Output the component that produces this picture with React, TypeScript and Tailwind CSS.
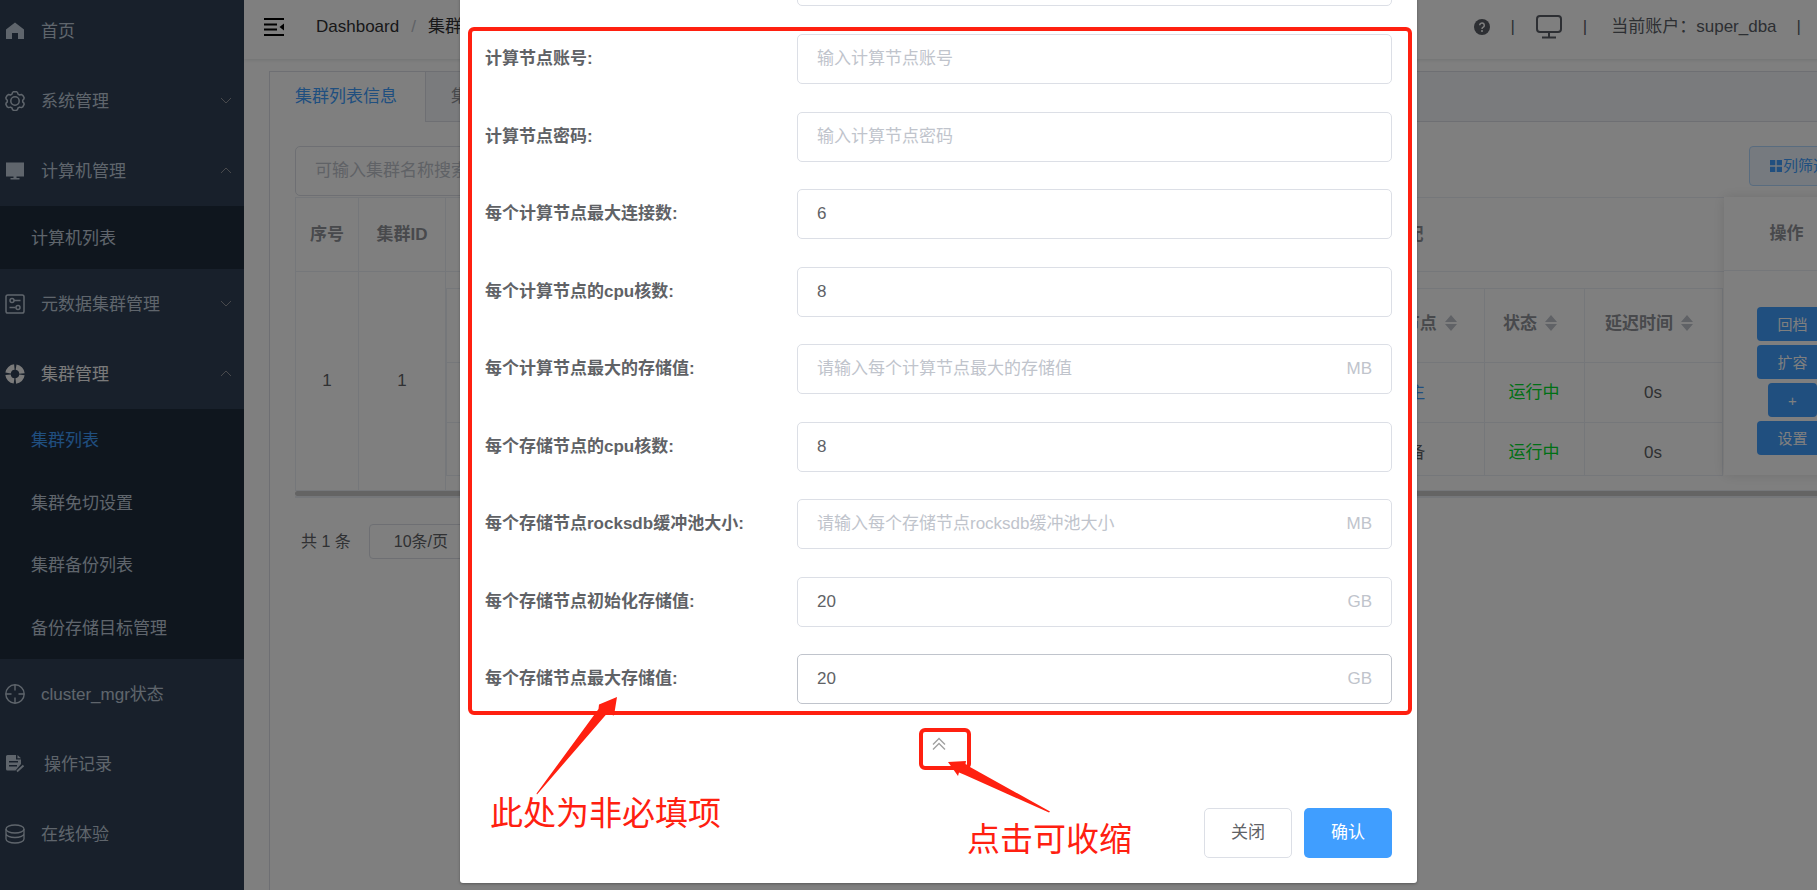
import type { ReactNode } from "react";

type IconName = "home" | "gear" | "monitor" | "sliders" | "help" | "aim" | "doc" | "coins";

function MenuIcon({ name }: { name: IconName }) {
  const shapes: Record<IconName, ReactNode> = {
    home: <path fill="currentColor" d="M10 1.4 1 8.6V18h6v-6h6v6h6V8.6z" />,
    gear: (
      <g fill="none" stroke="currentColor" strokeWidth="1.5" strokeLinejoin="round">
        <path d="M7.5 1.5 8.6.7h2.8l1.1.8.5 1.6 1.6.9 1.7-.5 1.5.8 1.3 2.4-.2 1.3-1.2 1.2v1.7l1.2 1.2.2 1.3-1.3 2.4-1.5.8-1.7-.5-1.6.9-.5 1.6-1.1.8H8.6l-1.1-.8-.5-1.6-1.6-.9-1.7.5-1.5-.8-1.3-2.4.2-1.3 1.2-1.2V9.2L1.1 8 .9 6.7l1.3-2.4 1.5-.8 1.7.5L7 3.1z" />
        <circle cx="10" cy="10" r="4.2" />
      </g>
    ),
    monitor: <path fill="currentColor" d="M1 1.5h18v14H1zM8.500 15.500h3V17h3v1.500h-9V17h3z" />,
    sliders: (
      <g fill="none" stroke="currentColor" strokeWidth="1.5">
        <rect x="1" y="1" width="18" height="18" rx="1.8" />
        <circle cx="7" cy="6.5" r="2" />
        <path d="M9 6.5h6.500M4.500 13.500h6" />
        <circle cx="13" cy="13.5" r="2" />
      </g>
    ),
    help: (
      <circle cx="10" cy="10" r="7" fill="none" stroke="currentColor" strokeWidth="5.4" strokeDasharray="9.2 1.8" strokeDashoffset="-.9" />
    ),
    aim: (
      <g fill="none" stroke="currentColor" strokeWidth="1.4">
        <circle cx="10" cy="10" r="9.2" />
        <path d="M10 1v5.500M10 13.500V19M1 10h5.500M13.500 10H19" />
      </g>
    ),
    doc: (
      <g>
        <path fill="currentColor" fillRule="evenodd" d="M2.500 1H11v4.500h5V10l-5.500 6.500h-8Q1 16.500 1 15V2.500Q1 1 2.500 1zM4 7v1.500h9V7zm0 4v1.500h8V11z" />
        <path fill="currentColor" d="M12.500 1 16 4.200h-3.500z" />
        <path stroke="currentColor" strokeWidth="1.8" d="m12 17.500 6.500-6" />
      </g>
    ),
    coins: (
      <g fill="none" stroke="currentColor" strokeWidth="1.3">
        <ellipse cx="10" cy="5" rx="9" ry="4" />
        <path d="M1 5v4.500c0 2.200 4 4 9 4s9-1.800 9-4V5M1 9.500V15c0 2.200 4 4 9 4s9-1.800 9-4V9.500" />
      </g>
    ),
  };
  return (
    <svg viewBox="0 0 20 20" className="size-5 shrink-0" aria-hidden="true">
      {shapes[name]}
    </svg>
  );
}

function Chevron({ up }: { up?: boolean }) {
  return (
    <svg viewBox="0 0 12 12" className="ml-auto size-3 text-[#909399]" fill="none" stroke="currentColor" aria-hidden="true">
      <path d={up ? "M1 8l5-5 5 5" : "M1 3l5 5 5-5"} />
    </svg>
  );
}

function MenuItem({ icon, label, open, active, wide }: { icon: IconName; label: string; open?: boolean; active?: boolean; wide?: boolean }) {
  return (
    <a href="#" className={`flex h-[70px] items-center pr-3 pl-[5px] ${active ? "text-[#f4f4f5]" : "text-[#bfcbd9]"} ${wide ? "gap-[19px]" : "gap-4"}`}>
      <MenuIcon name={icon} />
      <span className="pt-0.5">{label}</span>
      {open !== undefined && <Chevron up={open} />}
    </a>
  );
}

function SubItem({ label, active }: { label: string; active?: boolean }) {
  return (
    <a href="#" className={`flex items-center pt-0.5 pl-[31px] ${active ? "text-[#409eff]" : "text-[#bfcbd9]"}`}>
      {label}
    </a>
  );
}

function Sidebar() {
  return (
    <nav className="-mt-1 w-[244px] shrink-0 bg-[#304156]">
      <MenuItem icon="home" label="首页" />
      <MenuItem icon="gear" label="系统管理" open={false} />
      <MenuItem icon="monitor" label="计算机管理" open />
      <div className="grid h-[63px] bg-[#1f2d3d]">
        <SubItem label="计算机列表" />
      </div>
      <MenuItem icon="sliders" label="元数据集群管理" open={false} />
      <MenuItem icon="help" label="集群管理" open active />
      <div className="grid h-[250px] grid-rows-4 bg-[#1f2d3d]">
        <SubItem label="集群列表" active />
        <SubItem label="集群免切设置" />
        <SubItem label="集群备份列表" />
        <SubItem label="备份存储目标管理" />
      </div>
      <MenuItem icon="aim" label="cluster_mgr状态" />
      <MenuItem icon="doc" label="操作记录" wide />
      <MenuItem icon="coins" label="在线体验" />
    </nav>
  );
}

function TopBar() {
  return (
    <header className="flex h-[59px] shrink-0 items-center bg-white pr-[99px] pb-[6px] pl-5 text-[#303133] shadow-[0_1px_4px_rgba(0,21,41,0.12)]">
      <button type="button" aria-label="折叠菜单">
        <svg viewBox="0 0 20 18" className="h-[18px] w-5" aria-hidden="true">
          <path d="M0 1h20M0 6.500h13M0 11.500h13M0 17h20" stroke="#000" strokeWidth="2" />
          <path d="M20 5.500v7L15.500 9z" />
        </svg>
      </button>
      <div className="ml-8 flex items-center gap-3">
        <a href="#">Dashboard</a>
        <span className="text-[#c0c4cc]">/</span>
        <span>集群管理</span>
      </div>
      <div className="ml-auto flex items-center text-[#5a5e66]">
        <svg viewBox="0 0 16 16" className="size-4" aria-hidden="true">
          <circle cx="8" cy="8" r="8" fill="#5a5e66" />
          <path d="M5.700 6.300a2.300 2.300 0 1 1 3.600 1.900c-.9.6-1.300 1-1.300 1.700" fill="none" stroke="#fff" strokeWidth="1.5" />
          <circle cx="8" cy="12" r="1" fill="#fff" />
        </svg>
        <span className="ml-5">|</span>
        <svg viewBox="0 0 26 24" className="mx-[21px] h-6 w-[26px]" fill="none" stroke="currentColor" strokeWidth="2" aria-hidden="true">
          <rect x="1" y="1" width="24" height="16" rx="3" />
          <path d="M13 17v5M6 22.500h14" />
        </svg>
        <span>|</span>
        <span className="ml-6">当前账户：super_dba</span>
        <span className="ml-5">|</span>
      </div>
    </header>
  );
}

function SortArrows() {
  return (
    <svg viewBox="0 0 12 16" className="ml-2 inline-block h-4 w-3 align-[-2px]" fill="#c0c4cc" aria-hidden="true">
      <path d="M6 0l6 7H0zM6 16l6-7H0z" />
    </svg>
  );
}

function NodeTable() {
  const rows = [
    { role: "主", tone: "text-[#409eff]" },
    { role: "备", tone: "" },
  ];
  return (
    <div className="mt-4 h-[188px] overflow-hidden border-b border-[#ebeef5]">
      <table className="w-full table-fixed border-collapse border border-[#ebeef5] text-center">
        <colgroup>
          <col />
          <col className="w-[134px]" />
          <col className="w-[100px]" />
          <col className="w-[138px]" />
        </colgroup>
        <thead>
          <tr className="h-[74px] border-b border-[#ebeef5] text-[#909399]">
            <th />
            <th className="border-r border-[#ebeef5] pr-2 pb-1">主备节点<SortArrows /></th>
            <th className="border-r border-[#ebeef5] pr-2 pb-1">状态<SortArrows /></th>
            <th className="pr-2 pb-1">延迟时间<SortArrows /></th>
          </tr>
        </thead>
        <tbody>
          {rows.map((r) => (
            <tr key={r.role} className="h-[60px] border-b border-[#ebeef5]">
              <td />
              <td className={`border-r border-[#ebeef5] ${r.tone}`}>{r.role}</td>
              <td className="border-r border-[#ebeef5] text-[#00e02a]">运行中</td>
              <td>0s</td>
            </tr>
          ))}
        </tbody>
      </table>
    </div>
  );
}

function ActionButton({ label }: { label: string }) {
  return (
    <button type="button" className="h-[34px] rounded bg-[#409eff] px-5 text-[15px] leading-none text-white">
      {label}
    </button>
  );
}

function ClusterTable() {
  return (
    <div className="border-b-2 border-[#ebeef5]">
      <div className="relative">
        <table className="w-full table-fixed border-collapse border border-[#ebeef5] text-center">
          <colgroup>
            <col className="w-[63px]" />
            <col className="w-[87px]" />
            <col />
            <col className="w-[126px]" />
          </colgroup>
          <thead>
            <tr className="h-[74px] border-b border-[#ebeef5] text-[#909399]">
              <th className="border-r border-[#ebeef5]">序号</th>
              <th className="border-r border-[#ebeef5]">集群ID</th>
              <th className="pr-[299px] text-right">资源分配</th>
              <th />
            </tr>
          </thead>
          <tbody>
            <tr className="h-[219px] border-b border-[#ebeef5]">
              <td className="border-r border-[#ebeef5]">1</td>
              <td className="border-r border-[#ebeef5]">1</td>
              <td className="p-0 align-top">
                <NodeTable />
              </td>
              <td />
            </tr>
          </tbody>
        </table>
        <div className="absolute top-0 right-0 flex h-[278px] w-[125px] flex-col bg-white shadow-[0_0_12px_rgba(0,0,0,0.12)]">
          <div className="flex h-[74px] shrink-0 items-center justify-center border-b border-[#ebeef5] font-bold text-[#909399]">操作</div>
          <div className="flex flex-1 flex-col items-center justify-center gap-1 pt-4 pl-3">
            <ActionButton label="回档" />
            <ActionButton label="扩容" />
            <ActionButton label="+" />
            <ActionButton label="设置" />
          </div>
        </div>
      </div>
      <div className="h-[5px] rounded-full bg-[#c8c8c8]" />
    </div>
  );
}

function ClusterCard() {
  return (
    <section className="mx-[25px] mt-3 -mb-1 flex-1 border border-[#dcdfe6] bg-white">
      <div className="flex h-[50px] border-b border-[#dcdfe6] bg-[#f5f7fa]">
        <button type="button" className="-mb-px w-[156px] border-r border-[#dcdfe6] bg-white pl-[25px] text-left text-[#409eff]">
          集群列表信息
        </button>
        <button type="button" className="px-[25px] text-[#909399]">
          集群备份信息
        </button>
      </div>
      <div className="px-[25px] pt-6">
        <div className="mb-px flex items-start justify-between">
          <input
            aria-label="集群名称搜索"
            placeholder="可输入集群名称搜索"
            className="h-[50px] w-[250px] rounded-[5px] border border-[#dcdfe6] px-[19px] placeholder:text-[#c0c4cc]"
          />
          <button type="button" className="flex h-10 items-center gap-px rounded border border-[#b3d8ff] bg-[#ecf5ff] px-5 text-[15px] text-[#409eff]">
            <svg viewBox="0 0 12 12" className="size-3" fill="currentColor" aria-hidden="true">
              <path d="M0 0h5.300v5.300H0zM6.700 0H12v5.300H6.700zM0 6.700h5.300V12H0zM6.700 6.700H12V12H6.700z" />
            </svg>
            列筛选
          </button>
        </div>
        <ClusterTable />
        <div className="mt-[26px] flex items-center gap-[18px] pl-[6px] text-[16px]">
          <span>共 1 条</span>
          <button type="button" className="h-[35px] w-[125px] rounded border border-[#dcdfe6] pl-6 text-left">
            10条/页
          </button>
        </div>
      </div>
    </section>
  );
}

interface FieldDef {
  id: string;
  label: string;
  value?: string;
  placeholder?: string;
  unit?: string;
  hovered?: boolean;
}

const fields: FieldDef[] = [
  { id: "account", label: "计算节点账号:", placeholder: "输入计算节点账号" },
  { id: "password", label: "计算节点密码:", placeholder: "输入计算节点密码" },
  { id: "max-conn", label: "每个计算节点最大连接数:", value: "6" },
  { id: "comp-cpu", label: "每个计算节点的cpu核数:", value: "8" },
  { id: "comp-max", label: "每个计算节点最大的存储值:", placeholder: "请输入每个计算节点最大的存储值", unit: "MB" },
  { id: "store-cpu", label: "每个存储节点的cpu核数:", value: "8" },
  { id: "rocksdb", label: "每个存储节点rocksdb缓冲池大小:", placeholder: "请输入每个存储节点rocksdb缓冲池大小", unit: "MB" },
  { id: "store-init", label: "每个存储节点初始化存储值:", value: "20", unit: "GB" },
  { id: "store-max", label: "每个存储节点最大存储值:", value: "20", unit: "GB", hovered: true },
];

function Field({ field }: { field: FieldDef }) {
  return (
    <div className="flex items-center">
      <label htmlFor={field.id} className="w-[312px] shrink-0 font-bold">
        {field.label}
      </label>
      <div className={`flex h-[50px] min-w-0 flex-1 items-center rounded-[5px] border bg-white px-[19px] ${field.hovered ? "border-[#c0c4cc]" : "border-[#dcdfe6]"}`}>
        <input
          id={field.id}
          defaultValue={field.value}
          placeholder={field.placeholder}
          className="min-w-0 flex-1 outline-none placeholder:text-[#c0c4cc]"
        />
        {field.unit && <span className="text-[#c0c4cc]">{field.unit}</span>}
      </div>
    </div>
  );
}

function Dialog() {
  return (
    <div className="absolute inset-0 flex items-end justify-center overflow-hidden bg-black/50 pb-[7px] pl-[60px]">
      <form role="dialog" aria-label="新增集群" className="relative w-[957px] rounded-[3px] bg-white px-[25px] pb-[25px] shadow-[0_1px_3px_rgba(0,0,0,0.3)]">
        <div className="mb-7">
          <Field field={{ id: "previous", label: "" }} />
        </div>
        <div className="relative flex h-[670px] flex-col justify-between">
          {fields.map((f) => (
            <Field key={f.id} field={f} />
          ))}
          <div className="pointer-events-none absolute -top-[7px] -right-5 -bottom-[11px] -left-[17px] rounded-md border-4 border-[#ff2010]" />
        </div>
        <div className="flex justify-center pt-6 pl-3">
          <div className="flex h-[42px] w-[52px] items-start rounded-md border-4 border-[#ff2010] pt-[5px] pl-[9px]">
            <button type="button" aria-label="收起">
              <svg viewBox="0 0 14 14" className="size-[14px]" fill="none" stroke="#a0a0a0" strokeWidth="1.4" aria-hidden="true">
                <path d="M1 7.500l6-6 6 6M1 12.500l6-6 6 6" />
              </svg>
            </button>
          </div>
        </div>
        <div className="flex justify-end gap-3 pt-[38px]">
          <button type="button" className="h-[50px] w-[88px] rounded-[5px] border border-[#dcdfe6]">
            关闭
          </button>
          <button type="button" className="h-[50px] w-[88px] rounded-[5px] bg-[#409eff] text-white">
            确认
          </button>
        </div>
        <svg viewBox="0 0 82 98" className="absolute bottom-[88px] left-[76px] h-[98px] w-[82px]" fill="#ff2010" aria-hidden="true">
          <path d="M81 0 78 18.500 71 16.500 1 97.500.5 96.500 62.500 12 63 7.500z" />
        </svg>
        <p className="absolute bottom-[46px] left-[30px] text-[33px] leading-[46px] text-[#ff2010]">此处为非必填项</p>
        <svg viewBox="0 0 102 52" className="absolute bottom-[70px] left-[488px] h-[52px] w-[102px]" fill="#ff2010" aria-hidden="true">
          <path d="M0 1 18 0 17.500 3 22 6 102 50.500 101 51.500 17 14 11 11.500 10 15z" />
        </svg>
        <p className="absolute bottom-[20px] left-[507px] text-[33px] leading-[46px] text-[#ff2010]">点击可收缩</p>
      </form>
    </div>
  );
}

export default function App() {
  return (
    <div className="relative flex h-screen overflow-hidden bg-white font-['Liberation_Sans','Noto_Sans_CJK_SC',sans-serif] text-[17px] leading-6 text-[#606266]">
      <Sidebar />
      <main className="-mr-[83px] flex min-w-0 flex-1 flex-col">
        <TopBar />
        <ClusterCard />
      </main>
      <Dialog />
    </div>
  );
}
